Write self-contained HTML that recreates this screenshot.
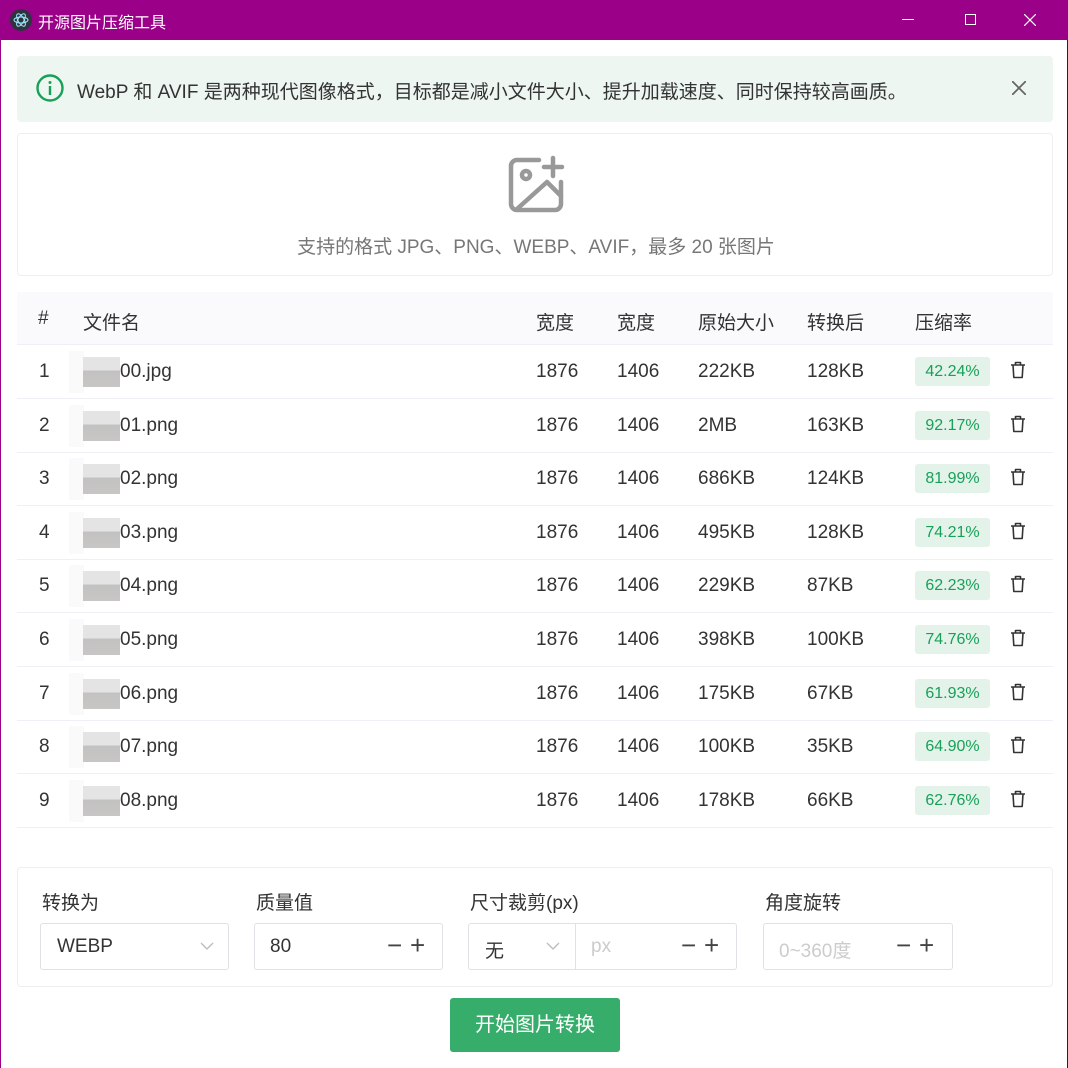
<!DOCTYPE html>
<html><head><meta charset="utf-8"><style>
*{box-sizing:border-box;margin:0;padding:0}
body{width:1068px;height:1068px;overflow:hidden;background:#fff;font-family:"Liberation Sans","Noto Sans CJK SC",sans-serif;color:#333;position:relative;font-size:19px}
.tb{position:absolute;left:0;top:0;width:1068px;height:40px;background:#9b0088;color:#fff}
.side{position:absolute;top:40px;bottom:0;width:1px;background:#9b0088}
.abs{position:absolute}
.alert{left:17px;top:56px;width:1036px;height:66px;background:#edf6f1;border-radius:4px}
.drop{left:17px;top:133px;width:1036px;height:143px;border:1px solid #eee;border-radius:4px}
.th{left:17px;top:292px;width:1036px;height:53px;background:#fafafc;border-bottom:1px solid #efeff5}
.row{position:absolute;left:17px;width:1036px;border-bottom:1px solid #efeff5}
.c{position:absolute;white-space:nowrap}
.tag{position:absolute;left:898px;width:75px;height:29px;background:#e3f3ea;color:#18a058;border-radius:3px;font-size:16px;text-align:center;line-height:29px}
.pan{left:17px;top:867px;width:1036px;height:120px;border:1px solid #eee;border-radius:4px}
.inp{position:absolute;top:923px;height:47px;border:1px solid #e0e0e6;border-radius:3px}
.lbl{position:absolute;top:888px;font-size:19px}
.pm{position:absolute;top:933px;font-size:26px;color:#444;line-height:24px}
</style></head><body>
<div class="tb">
<svg class="abs" style="left:10px;top:9px" width="22" height="22" viewBox="0 0 22 22"><circle cx="11" cy="11" r="11" fill="#2f3241"/><g fill="none" stroke="#9feaf9" stroke-width="1"><ellipse cx="11" cy="11" rx="7" ry="3" transform="rotate(60 11 11)"/><ellipse cx="11" cy="11" rx="7" ry="3" transform="rotate(-60 11 11)"/><ellipse cx="11" cy="11" rx="7" ry="3"/></g></svg>
<div class="abs" style="left:38px;top:9px;font-size:16px">开源图片压缩工具</div>
<div class="abs" style="left:902px;top:19px;width:12px;height:1px;background:#fff"></div>
<div class="abs" style="left:965px;top:14px;width:11px;height:11px;border:1px solid #fff"></div>
<svg class="abs" style="left:1024px;top:14px" width="12" height="12" viewBox="0 0 12 12"><path d="M0 0L12 12M12 0L0 12" stroke="#fff" stroke-width="1.2"/></svg>
</div>
<div class="side" style="left:0"></div><div class="side" style="right:0;background:#5a0050"></div>
<div class="abs alert">
<svg class="abs" style="left:18px;top:17px" width="30" height="30" viewBox="0 0 30 30"><circle cx="15" cy="15" r="12.5" fill="none" stroke="#18a058" stroke-width="2.4"/><rect x="13.8" y="13" width="2.4" height="9" fill="#18a058"/><circle cx="15" cy="9.5" r="1.5" fill="#18a058"/></svg>
<div class="abs" style="left:60px;top:21px;font-size:19px;color:#333">WebP 和 AVIF 是两种现代图像格式，目标都是减小文件大小、提升加载速度、同时保持较高画质。</div>
<svg class="abs" style="left:995px;top:25px" width="14" height="14" viewBox="0 0 14 14"><path d="M0 0L14 14M14 0L0 14" stroke="#666" stroke-width="1.8"/></svg>
</div>
<div class="abs drop">
<svg class="abs" style="left:489px;top:20px" width="60" height="60" viewBox="0 0 60 60" fill="none" stroke="#999" stroke-width="4.5" stroke-linecap="round" stroke-linejoin="round"><path d="M32 6H10a6 6 0 0 0-6 6v38a6 6 0 0 0 6 6h38a6 6 0 0 0 6-6V28"/><circle cx="19" cy="21" r="4"/><path d="M10 55L40 28l14 14"/><path d="M46 4v18M37 13h18"/></svg>
<div class="abs" style="left:0;width:1036px;top:98px;text-align:center;font-size:19px;color:#777">支持的格式 JPG、PNG、WEBP、AVIF，最多 20 张图片</div>
</div>
<div class="abs th">
<div class="c" style="left:21px;top:16px">#</div><div class="c" style="left:66px;top:16px">文件名</div>
<div class="c" style="left:519px;top:16px">宽度</div><div class="c" style="left:600px;top:16px">宽度</div>
<div class="c" style="left:681px;top:16px">原始大小</div><div class="c" style="left:790px;top:16px">转换后</div><div class="c" style="left:898px;top:16px">压缩率</div>
</div>
<div id="rows"></div>
<script>
const d=[["1","00.jpg","222KB","128KB","42.24%"],["2","01.png","2MB","163KB","92.17%"],["3","02.png","686KB","124KB","81.99%"],["4","03.png","495KB","128KB","74.21%"],["5","04.png","229KB","87KB","62.23%"],["6","05.png","398KB","100KB","74.76%"],["7","06.png","175KB","67KB","61.93%"],["8","07.png","100KB","35KB","64.90%"],["9","08.png","178KB","66KB","62.76%"]];
const trash='<svg class="abs" style="left:993px;top:16px" width="16" height="18" viewBox="0 0 16 18" fill="none" stroke="#333" stroke-width="1.6" stroke-linejoin="round"><path d="M1 4h14M5.5 4V1.5h5V4M3 4l.8 12.5h8.4L13 4"/></svg>';
let h="";d.forEach((r,i)=>{const t=345+i*53.6;h+=`<div class="row" style="top:${t}px;height:54px"><div class="c" style="left:22px;top:16px">${r[0]}</div><div class="abs" style="left:52px;top:6px;width:50px;height:42px;background:linear-gradient(90deg,#fafafa 0,#fafafa 30%,transparent 30%)"></div><div class="abs" style="left:66px;top:12px;width:37px;height:30px;background:linear-gradient(#e4e4e4 0,#e4e4e4 45%,#c2c2c2 45%,#c8c6c4 100%)"></div><div class="c" style="left:103px;top:16px">${r[1]}</div><div class="c" style="left:519px;top:16px">1876</div><div class="c" style="left:600px;top:16px">1406</div><div class="c" style="left:681px;top:16px">${r[2]}</div><div class="c" style="left:790px;top:16px">${r[3]}</div><div class="tag" style="top:12px">${r[4]}</div>${trash}</div>`});
document.getElementById("rows").innerHTML=h;
</script>
<div class="abs pan"></div>
<div class="lbl" style="left:42px">转换为</div><div class="lbl" style="left:256px">质量值</div><div class="lbl" style="left:470px">尺寸裁剪(px)</div><div class="lbl" style="left:765px">角度旋转</div>
<div class="inp" style="left:40px;width:189px"><div class="c" style="left:16px;top:12px">WEBP</div><svg class="abs" style="left:159px;top:18px" width="14" height="8" viewBox="0 0 14 8"><path d="M1 1l6 6 6-6" fill="none" stroke="#bbb" stroke-width="1.3"/></svg></div>
<div class="inp" style="left:254px;width:189px"><div class="c" style="left:15px;top:12px">80</div></div>
<div class="pm" style="left:387px">−</div><div class="pm" style="left:410px">+</div>
<div class="inp" style="left:468px;width:108px;border-radius:3px 0 0 3px"><div class="c" style="left:16px;top:12px">无</div><svg class="abs" style="left:77px;top:18px" width="14" height="8" viewBox="0 0 14 8"><path d="M1 1l6 6 6-6" fill="none" stroke="#bbb" stroke-width="1.3"/></svg></div>
<div class="inp" style="left:575px;width:162px;border-radius:0 3px 3px 0"><div class="c" style="left:15px;top:12px;color:#ccc">px</div></div>
<div class="pm" style="left:681px">−</div><div class="pm" style="left:704px">+</div>
<div class="inp" style="left:763px;width:190px"><div class="c" style="left:15px;top:12px;color:#ccc">0~360度</div></div>
<div class="pm" style="left:896px">−</div><div class="pm" style="left:919px">+</div>
<div class="abs" style="left:450px;top:998px;width:170px;height:54px;background:#36ad6a;border-radius:3px;color:#fff;font-size:20px;text-align:center;line-height:54px">开始图片转换</div>
</body></html>
